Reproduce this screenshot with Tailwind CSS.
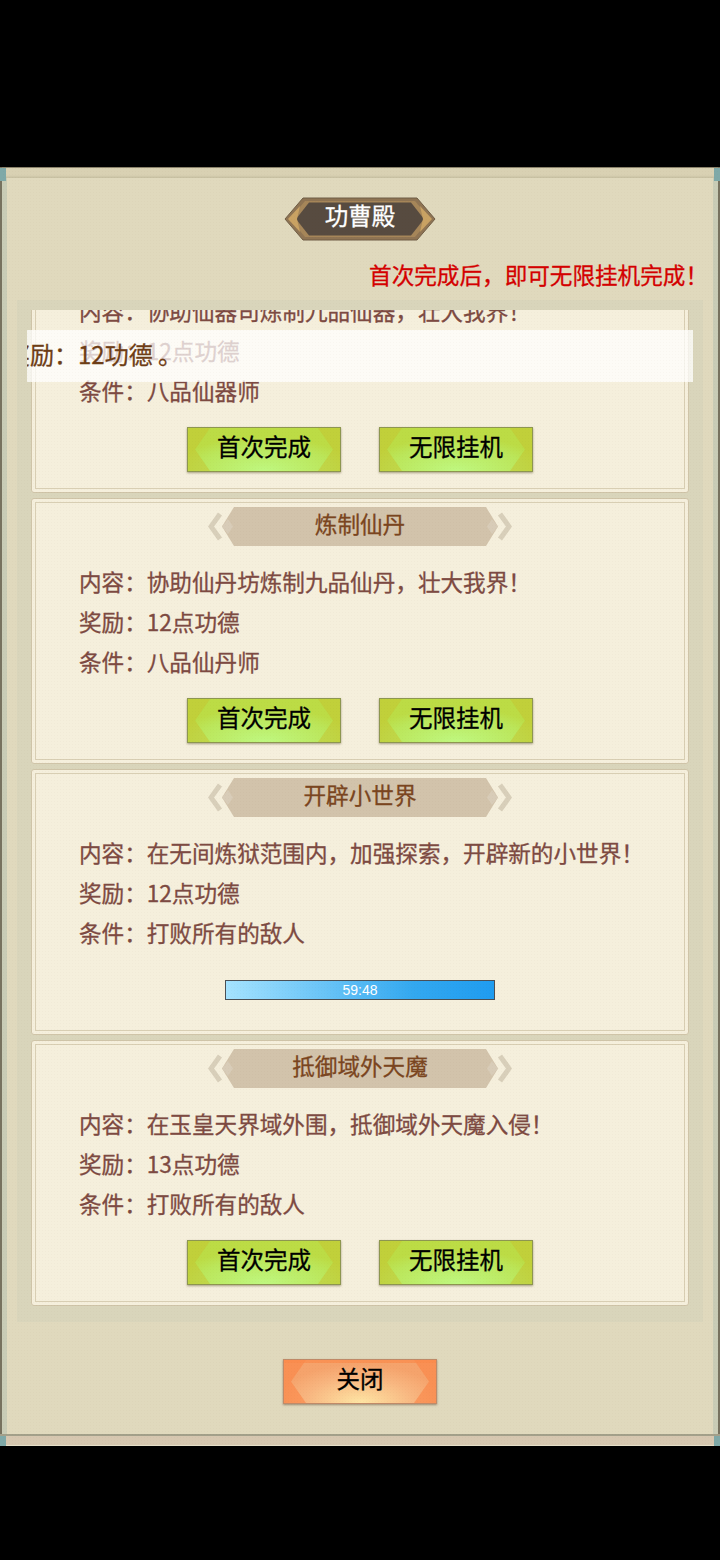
<!DOCTYPE html>
<html lang="zh-CN">
<head>
  <meta charset="UTF-8" />
  <title>功曹殿</title>
  <script src="https://cdn.jsdelivr.net/npm/@tailwindcss/browser@4"></script>
</head>
<body class="bg-black w-[720px] h-[1560px] overflow-hidden font-['Noto_Sans_CJK_SC','Noto_Sans',sans-serif]">

  <div class="h-[167px]"></div>

  <!-- Panel -->
  <div class="relative h-[1279px] flex flex-col border-x-[2px] border-x-[#77725f] bg-[#e0d9bd] shadow-[inset_5px_0_0_#c9ccb6,inset_-5px_0_0_#c9ccb6] [-webkit-text-stroke:0.3px]">
    <!-- top bar -->
    <div class="h-[11px] bg-[linear-gradient(180deg,#d9d1b3,#d9d1b3_70%,#c6bfa1)] border-t border-[#8a826a]"></div>
    <div class="absolute -left-[2px] top-[1px] w-[6px] h-[13px] bg-[#7fa9a8]"></div>
    <div class="absolute -right-[2px] top-[1px] w-[6px] h-[13px] bg-[#7fa9a8]"></div>

    <!-- Title -->
    <div class="relative mt-[19px] mx-auto w-[152px] h-[44px] flex items-center justify-center">
      <svg class="absolute inset-0" width="152" height="44" viewBox="0 0 152 44">
        <polygon points="1,22 19,1 133,1 151,22 133,43 19,43" fill="#8f7453" stroke="#6f5d46" stroke-width="1"/>
        <polygon points="6,22 21,4 131,4 146,22 131,40 21,40" fill="#a68659"/>
        <polygon points="12,22 25,5.5 127,5.5 140,22 127,38.5 25,38.5" fill="#574b40"/>
        <path d="M4 22 L16 9 L13 22 L16 35 Z" fill="#c9a263"/>
        <path d="M148 22 L136 9 L139 22 L136 35 Z" fill="#c9a263"/>
      </svg>
      <span class="relative -mt-[6px] text-white text-[23.5px] leading-none">功曹殿</span>
    </div>

    <!-- Notice -->
    <p class="mt-[19px] pr-[10px] text-right text-[22.6px] leading-[30px] text-[#d40000]">首次完成后，即可无限挂机完成！</p>

    <!-- List -->
    <div class="mt-[10px] mx-[15px] h-[1022px] py-[10px] px-[14px] bg-[#d9d5bb]">
      <div class="h-[996px] overflow-hidden">
        <div class="-mt-[83px] flex flex-col gap-[5px]">

          <div class="h-[266px] bg-[#f5efdc] border border-[#cfc4a8] outline outline-1 -outline-offset-[5px] outline-[#d8ceb3] rounded-[3px] flex flex-col items-center">
            <div class="relative mt-[8px] w-[304px] h-[40px] flex items-center justify-center">
              <svg class="absolute inset-0" width="304" height="40" viewBox="0 0 304 40">
                <path d="M12 7 L3 19.5 L12 32 M292 7 L301 19.5 L292 32" fill="none" stroke="#d8cfba" stroke-width="5"/>
                <polygon points="14,19.5 26,0 278,0 290,19.5 278,39 26,39" fill="#d2c3ab"/>
                <path d="M14 19.5 L20 12 L25 19.5 L20 27 Z M290 19.5 L284 12 L279 19.5 L284 27 Z" fill="#d8ccb8"/>
              </svg>
              <span class="relative -mt-[5px] text-[22.6px] leading-none text-[#7a4520]">炼制仙器</span>
            </div>
            <div class="mt-[15px] w-full pl-[47px] text-[22.6px] leading-[40px] text-[#7d4a42]">
              <p>内容：协助仙器司炼制九品仙器，壮大我界！</p>
              <p>奖励：12点功德</p>
              <p>条件：八品仙器师</p>
            </div>
            <div class="mt-[16px] flex gap-[38px]">
              <button class="relative w-[154px] h-[45px] pb-[6px] border border-[#8d9650] bg-[radial-gradient(ellipse_60%_80%_at_50%_100%,#bff880,#bbe65a_75%,#bcdc45)] text-black text-[23.5px] shadow-[0_1px_2px_rgba(90,80,40,.5)]">
                <svg class="absolute inset-0" width="152" height="43" viewBox="0 0 152 43"><path d="M0 0 H22 L7 21.5 L22 43 H0 Z M152 0 H130 L145 21.5 L130 43 H152 Z" fill="#c6c42f" fill-opacity=".5"/></svg>
                <span class="relative">首次完成</span>
              </button>
              <button class="relative w-[154px] h-[45px] pb-[6px] border border-[#8d9650] bg-[radial-gradient(ellipse_60%_80%_at_50%_100%,#bff880,#bbe65a_75%,#bcdc45)] text-black text-[23.5px] shadow-[0_1px_2px_rgba(90,80,40,.5)]">
                <svg class="absolute inset-0" width="152" height="43" viewBox="0 0 152 43"><path d="M0 0 H22 L7 21.5 L22 43 H0 Z M152 0 H130 L145 21.5 L130 43 H152 Z" fill="#c6c42f" fill-opacity=".5"/></svg>
                <span class="relative">无限挂机</span>
              </button>
            </div>
          </div>

          <div class="h-[266px] bg-[#f5efdc] border border-[#cfc4a8] outline outline-1 -outline-offset-[5px] outline-[#d8ceb3] rounded-[3px] flex flex-col items-center">
            <div class="relative mt-[8px] w-[304px] h-[40px] flex items-center justify-center">
              <svg class="absolute inset-0" width="304" height="40" viewBox="0 0 304 40">
                <path d="M12 7 L3 19.5 L12 32 M292 7 L301 19.5 L292 32" fill="none" stroke="#d8cfba" stroke-width="5"/>
                <polygon points="14,19.5 26,0 278,0 290,19.5 278,39 26,39" fill="#d2c3ab"/>
                <path d="M14 19.5 L20 12 L25 19.5 L20 27 Z M290 19.5 L284 12 L279 19.5 L284 27 Z" fill="#d8ccb8"/>
              </svg>
              <span class="relative -mt-[5px] text-[22.6px] leading-none text-[#7a4520]">炼制仙丹</span>
            </div>
            <div class="mt-[15px] w-full pl-[47px] text-[22.6px] leading-[40px] text-[#7d4a42]">
              <p>内容：协助仙丹坊炼制九品仙丹，壮大我界！</p>
              <p>奖励：12点功德</p>
              <p>条件：八品仙丹师</p>
            </div>
            <div class="mt-[16px] flex gap-[38px]">
              <button class="relative w-[154px] h-[45px] pb-[6px] border border-[#8d9650] bg-[radial-gradient(ellipse_60%_80%_at_50%_100%,#bff880,#bbe65a_75%,#bcdc45)] text-black text-[23.5px] shadow-[0_1px_2px_rgba(90,80,40,.5)]">
                <svg class="absolute inset-0" width="152" height="43" viewBox="0 0 152 43"><path d="M0 0 H22 L7 21.5 L22 43 H0 Z M152 0 H130 L145 21.5 L130 43 H152 Z" fill="#c6c42f" fill-opacity=".5"/></svg>
                <span class="relative">首次完成</span>
              </button>
              <button class="relative w-[154px] h-[45px] pb-[6px] border border-[#8d9650] bg-[radial-gradient(ellipse_60%_80%_at_50%_100%,#bff880,#bbe65a_75%,#bcdc45)] text-black text-[23.5px] shadow-[0_1px_2px_rgba(90,80,40,.5)]">
                <svg class="absolute inset-0" width="152" height="43" viewBox="0 0 152 43"><path d="M0 0 H22 L7 21.5 L22 43 H0 Z M152 0 H130 L145 21.5 L130 43 H152 Z" fill="#c6c42f" fill-opacity=".5"/></svg>
                <span class="relative">无限挂机</span>
              </button>
            </div>
          </div>

          <div class="h-[266px] bg-[#f5efdc] border border-[#cfc4a8] outline outline-1 -outline-offset-[5px] outline-[#d8ceb3] rounded-[3px] flex flex-col items-center">
            <div class="relative mt-[8px] w-[304px] h-[40px] flex items-center justify-center">
              <svg class="absolute inset-0" width="304" height="40" viewBox="0 0 304 40">
                <path d="M12 7 L3 19.5 L12 32 M292 7 L301 19.5 L292 32" fill="none" stroke="#d8cfba" stroke-width="5"/>
                <polygon points="14,19.5 26,0 278,0 290,19.5 278,39 26,39" fill="#d2c3ab"/>
                <path d="M14 19.5 L20 12 L25 19.5 L20 27 Z M290 19.5 L284 12 L279 19.5 L284 27 Z" fill="#d8ccb8"/>
              </svg>
              <span class="relative -mt-[5px] text-[22.6px] leading-none text-[#7a4520]">开辟小世界</span>
            </div>
            <div class="mt-[15px] w-full pl-[47px] text-[22.6px] leading-[40px] text-[#7d4a42]">
              <p>内容：在无间炼狱范围内，加强探索，开辟新的小世界！</p>
              <p>奖励：12点功德</p>
              <p>条件：打败所有的敌人</p>
            </div>
            <div class="mt-[27px] w-[270px] h-[20px] border border-[#4a4f55] bg-[linear-gradient(90deg,#a5e3ff,#33a8f0_70%,#1f9cf0)] flex items-center justify-center">
              <span class="text-white text-[14px] leading-none [-webkit-text-stroke:0px] font-['Liberation_Sans',sans-serif]">59:48</span>
            </div>
          </div>

          <div class="h-[266px] bg-[#f5efdc] border border-[#cfc4a8] outline outline-1 -outline-offset-[5px] outline-[#d8ceb3] rounded-[3px] flex flex-col items-center">
            <div class="relative mt-[8px] w-[304px] h-[40px] flex items-center justify-center">
              <svg class="absolute inset-0" width="304" height="40" viewBox="0 0 304 40">
                <path d="M12 7 L3 19.5 L12 32 M292 7 L301 19.5 L292 32" fill="none" stroke="#d8cfba" stroke-width="5"/>
                <polygon points="14,19.5 26,0 278,0 290,19.5 278,39 26,39" fill="#d2c3ab"/>
                <path d="M14 19.5 L20 12 L25 19.5 L20 27 Z M290 19.5 L284 12 L279 19.5 L284 27 Z" fill="#d8ccb8"/>
              </svg>
              <span class="relative -mt-[5px] text-[22.6px] leading-none text-[#7a4520]">抵御域外天魔</span>
            </div>
            <div class="mt-[15px] w-full pl-[47px] text-[22.6px] leading-[40px] text-[#7d4a42]">
              <p>内容：在玉皇天界域外围，抵御域外天魔入侵！</p>
              <p>奖励：13点功德</p>
              <p>条件：打败所有的敌人</p>
            </div>
            <div class="mt-[16px] flex gap-[38px]">
              <button class="relative w-[154px] h-[45px] pb-[6px] border border-[#8d9650] bg-[radial-gradient(ellipse_60%_80%_at_50%_100%,#bff880,#bbe65a_75%,#bcdc45)] text-black text-[23.5px] shadow-[0_1px_2px_rgba(90,80,40,.5)]">
                <svg class="absolute inset-0" width="152" height="43" viewBox="0 0 152 43"><path d="M0 0 H22 L7 21.5 L22 43 H0 Z M152 0 H130 L145 21.5 L130 43 H152 Z" fill="#c6c42f" fill-opacity=".5"/></svg>
                <span class="relative">首次完成</span>
              </button>
              <button class="relative w-[154px] h-[45px] pb-[6px] border border-[#8d9650] bg-[radial-gradient(ellipse_60%_80%_at_50%_100%,#bff880,#bbe65a_75%,#bcdc45)] text-black text-[23.5px] shadow-[0_1px_2px_rgba(90,80,40,.5)]">
                <svg class="absolute inset-0" width="152" height="43" viewBox="0 0 152 43"><path d="M0 0 H22 L7 21.5 L22 43 H0 Z M152 0 H130 L145 21.5 L130 43 H152 Z" fill="#c6c42f" fill-opacity=".5"/></svg>
                <span class="relative">无限挂机</span>
              </button>
            </div>
          </div>

        </div>
      </div>
    </div>

    <!-- Close -->
    <button class="relative mt-[37px] mx-auto w-[154px] h-[45px] pb-[6px] border border-[#c08a68] bg-[radial-gradient(ellipse_55%_90%_at_50%_100%,#fee5a4,#f8b680_65%,#f5a36c)] text-black text-[23.5px] shadow-[0_1px_2px_rgba(90,60,40,.5)]">
      <svg class="absolute inset-0" width="152" height="43" viewBox="0 0 152 43"><path d="M0 0 H22 L7 21.5 L22 43 H0 Z M152 0 H130 L145 21.5 L130 43 H152 Z" fill="#fb8445" fill-opacity=".6"/><rect width="152" height="3" fill="#fb8a4c" fill-opacity=".7"/></svg>
      <span class="relative">关闭</span>
    </button>

    <!-- bottom bar -->
    <div class="absolute -left-[2px] -right-[2px] bottom-0 h-[12px] bg-[#d6c7b0] border-t-[2px] border-t-[#a3a08a] border-b border-b-[#e6dfc8]"></div>
    <div class="absolute -left-[2px] bottom-0 w-[6px] h-[10px] bg-[#7fa9a8]"></div>
    <div class="absolute -right-[2px] bottom-0 w-[6px] h-[10px] bg-[#7fa9a8]"></div>

    <!-- Toast -->
    <div class="absolute left-[25px] top-[163px] w-[666px] h-[52px] bg-white/75 overflow-hidden flex items-center">
      <p class="-ml-[21px] -mt-[5px] whitespace-nowrap text-[24px] leading-none text-[#6e3d15]">奖励：12功德 。</p>
    </div>

    <!-- paper grain -->
    <div class="absolute inset-0 pointer-events-none bg-[radial-gradient(rgba(90,70,30,.025)_1px,transparent_1px)] bg-[length:3px_3px]"></div>
  </div>

</body>
</html>
